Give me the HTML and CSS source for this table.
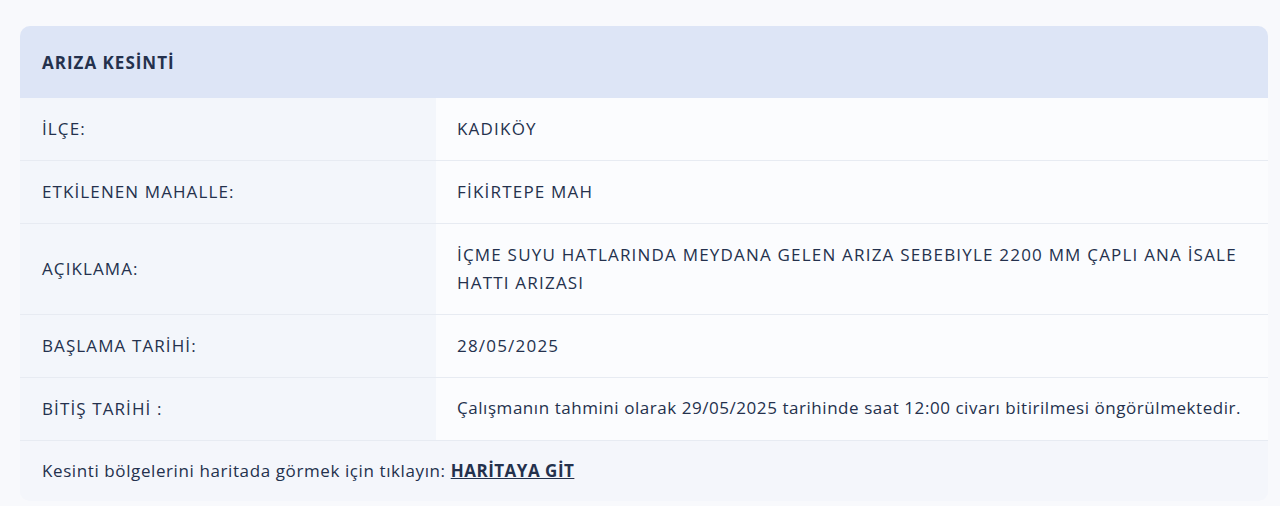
FILE: index.html
```html
<!DOCTYPE html>
<html lang="tr">
<head>
    <meta charset="UTF-8">
    <meta name="viewport" content="width=device-width, initial-scale=1.0">
    <title>Arıza Kesinti</title>
    <link rel="stylesheet" href="styles.css">
</head>
<body>
    <div class="card">
        <div class="card-head">ARIZA KESİNTİ</div>
        <div class="row">
            <div class="label">İLÇE:</div>
            <div class="value">KADIKÖY</div>
        </div>
        <div class="row">
            <div class="label">ETKİLENEN MAHALLE:</div>
            <div class="value">FİKİRTEPE MAH</div>
        </div>
        <div class="row">
            <div class="label">AÇIKLAMA:</div>
            <div class="value">İÇME SUYU HATLARINDA MEYDANA GELEN ARIZA SEBEBIYLE 2200 MM ÇAPLI ANA İSALE HATTI ARIZASI</div>
        </div>
        <div class="row">
            <div class="label">BAŞLAMA TARİHİ:</div>
            <div class="value">28/05/2025</div>
        </div>
        <div class="row">
            <div class="label">BİTİŞ TARİHİ :</div>
            <div class="value sentence">Çalışmanın tahmini olarak 29/05/2025 tarihinde saat 12:00 civarı bitirilmesi öngörülmektedir.</div>
        </div>
        <div class="card-foot">
            Kesinti bölgelerini haritada görmek için tıklayın: <a href="#">HARİTAYA GİT</a>
        </div>
    </div>
</body>
</html>
```

FILE: styles.css
```css
* {
    margin: 0;
    padding: 0;
    box-sizing: border-box;
    font-family: 'Open Sans', sans-serif;
}

body {
    background: #f8f9fc;
    color: #24314d;
    padding: 26px 12px 6px 20px;
}

.card {
    border-radius: 10px;
    overflow: hidden;
    background: #f4f6fb;
}

.card-head {
    background: #dde5f6;
    height: 72px;
    display: flex;
    align-items: center;
    padding: 0 22px;
    font-size: 17px;
    font-weight: 700;
    letter-spacing: 1px;
}

.row {
    display: grid;
    grid-template-columns: 416px 1fr;
    border-bottom: 1px solid #e7ebf2;
    font-size: 17px;
    font-weight: 500;
    line-height: 28px;
    letter-spacing: 1.1px;
}

.label {
    padding: 17px 22px;
    background: #f3f6fb;
    display: flex;
    align-items: center;
}

.value {
    padding: 17px 16px 17px 21px;
    background: #fbfcfe;
    letter-spacing: 1.2px;
}

.value.sentence {
    padding: 16px 16px 16px 21px;
    letter-spacing: 0.55px;
}

.card-foot {
    padding: 16px 22px 16px;
    font-size: 17px;
    font-weight: 500;
    line-height: 28px;
    letter-spacing: 0.6px;
    background: #f4f6fb;
}

.card-foot a {
    color: #24314d;
    font-weight: 700;
    letter-spacing: 0.5px;
}
```
